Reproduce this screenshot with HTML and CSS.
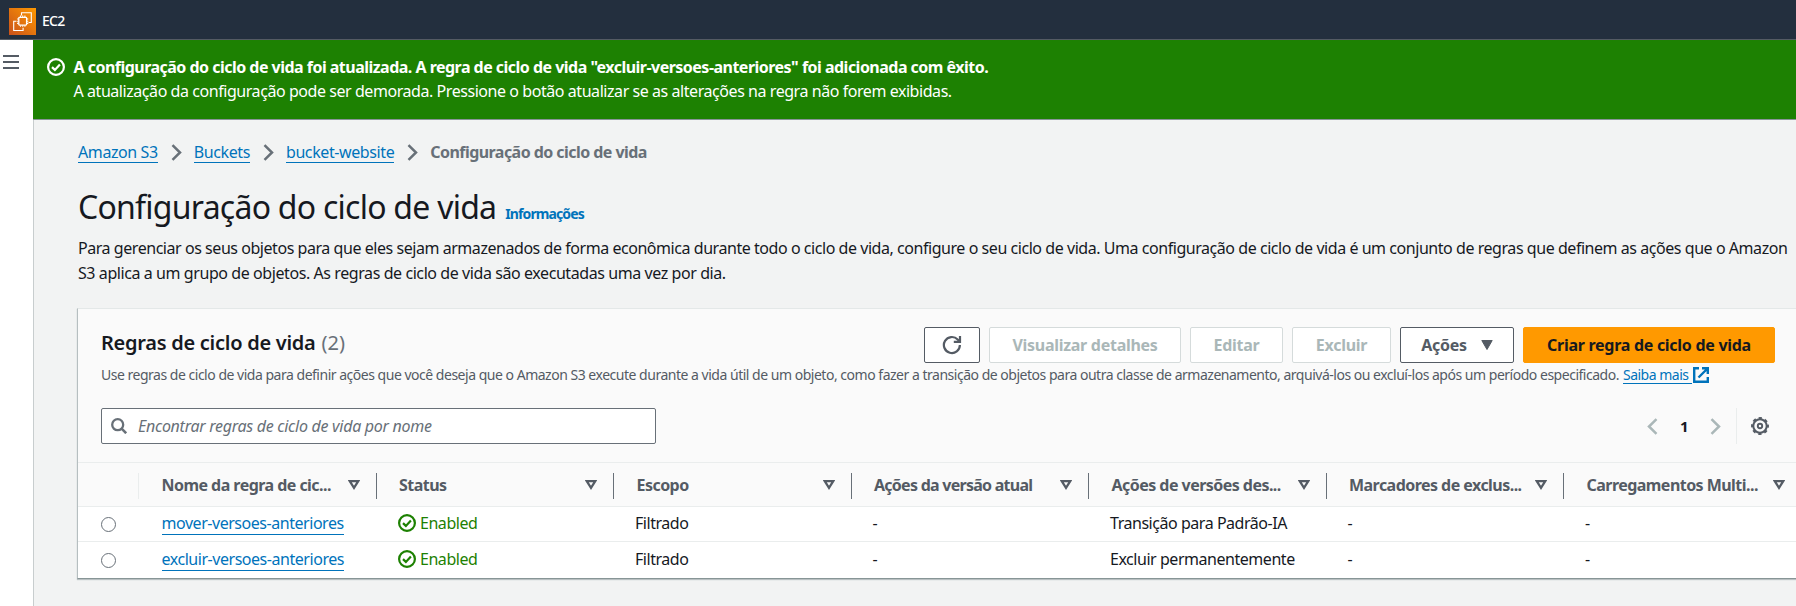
FILE: index.html
```html
<!DOCTYPE html>
<html lang="pt-BR">
<head>
<meta charset="utf-8">
<title>Configuração do ciclo de vida</title>
<link rel="stylesheet" href="styles.css">
</head>
<body>
<svg class="defs" width="0" height="0">
  <defs>
    <symbol id="chev" viewBox="0 0 11 17"><path d="M1.500 1.200 9 8.500 1.500 15.800" fill="none" stroke="currentColor" stroke-width="2.500"/></symbol>
    <symbol id="sort" viewBox="0 0 12 10"><path d="M1.800 1.200h8.400L6 7.900Z" fill="none" stroke="currentColor" stroke-width="2.200"/></symbol>
    <symbol id="check" viewBox="0 0 18 18"><circle cx="9" cy="9" r="7.900" fill="none" stroke="currentColor" stroke-width="2.200"/><path d="m5 9.100 2.900 2.800L12.900 6.600" fill="none" stroke="currentColor" stroke-width="2.200"/></symbol>
  </defs>
</svg>

<header class="topbar">
  <svg class="logo" viewBox="0 0 27 27">
    <defs><linearGradient id="lg" x1="0" y1="1" x2="1" y2="0"><stop offset="0" stop-color="#c8511b"/><stop offset="1" stop-color="#f90"/></linearGradient></defs>
    <rect width="27" height="27" fill="url(#lg)"/>
    <g fill="none" stroke="#fff" stroke-width="1.100">
      <path d="M12.500 7.500V4.800h9.800v9.700h-2.700M7.500 13.200H4.700v9.300h9.400v-2.700"/>
      <rect x="9.800" y="9.300" width="7.800" height="7.800" rx=".8" stroke-width="1.300"/>
      <path d="M11.500 9V7.600M13.700 9V7.600M15.900 9V7.600M11.500 18.800v-1.400M13.700 18.800v-1.400M15.900 18.800v-1.400M9.500 11H8.100M9.500 13.200H8.100M9.500 15.400H8.100M19.300 11h-1.400M19.300 13.200h-1.400M19.300 15.400h-1.400"/>
    </g>
  </svg>
  <span class="service">EC2</span>
</header>

<div class="shell">
  <aside class="rail"><div class="menu"><i></i><i></i><i></i></div></aside>
  <main class="main">
    <section class="flash">
      <svg class="flash-icon"><use href="#check"/></svg>
      <div class="flash-text">
        <div class="flash-title">A configuração do ciclo de vida foi atualizada. A regra de ciclo de vida "excluir-versoes-anteriores" foi adicionada com êxito.</div>
        <div class="flash-body">A atualização da configuração pode ser demorada. Pressione o botão atualizar se as alterações na regra não forem exibidas.</div>
      </div>
    </section>

    <div class="content">
      <nav class="crumbs">
        <a class="link">Amazon S3</a><svg><use href="#chev"/></svg>
        <a class="link">Buckets</a><svg><use href="#chev"/></svg>
        <a class="link">bucket-website</a><svg><use href="#chev"/></svg>
        <b>Configuração do ciclo de vida</b>
      </nav>
      <div class="title"><h1>Configuração do ciclo de vida</h1><span class="info">Informações</span></div>
      <p class="intro"><span class="intro-line">Para gerenciar os seus objetos para que eles sejam armazenados de forma econômica durante todo o ciclo de vida, configure o seu ciclo de vida. Uma configuração de ciclo de vida é um conjunto de regras que definem as ações que o Amazon</span> <span class="intro-line second">S3 aplica a um grupo de objetos. As regras de ciclo de vida são executadas uma vez por dia.</span></p>

      <section class="panel">
        <div class="panel-head">
          <div class="actions-row">
            <h2>Regras de ciclo de vida <span class="count">(2)</span></h2>
            <div class="buttons">
              <button class="btn refresh"><svg viewBox="0 0 20 20"><path d="M17.900 10a8 8 0 1 1-2.200-5.500L17 5.900" fill="none" stroke="currentColor" stroke-width="2.200"/><path d="M18 1v5.800h-6.200" fill="none" stroke="currentColor" stroke-width="2.200"/></svg></button>
              <button class="btn off details">Visualizar detalhes</button>
              <button class="btn off edit">Editar</button>
              <button class="btn off delete">Excluir</button>
              <button class="btn menu-btn">Ações<svg viewBox="0 0 12 10"><path d="M.8.500h10.400L6 9.500Z" fill="currentColor" stroke="currentColor" stroke-linejoin="round"/></svg></button>
              <button class="btn primary">Criar regra de ciclo de vida</button>
            </div>
          </div>
          <div class="desc"><span class="desc-text">Use regras de ciclo de vida para definir ações que você deseja que o Amazon S3 execute durante a vida útil de um objeto, como fazer a transição de objetos para outra classe de armazenamento, arquivá-los ou excluí-los após um período especificado.</span><a class="link more">Saiba mais</a><svg class="ext" viewBox="0 0 16 16"><path d="M6 1.200H1.200v13.600h13.600V10M9 1.200h5.800V7M14.500 1.500 5.500 10.500" fill="none" stroke="currentColor" stroke-width="2.400"/></svg></div>
          <div class="tools">
            <div class="search"><svg viewBox="0 0 16 16"><circle cx="6.700" cy="6.700" r="5.500" fill="none" stroke="currentColor" stroke-width="2.300"/><path d="m10.600 10.600 4.600 4.600" stroke="currentColor" stroke-width="2.600"/></svg><span>Encontrar regras de ciclo de vida por nome</span></div>
            <div class="pager">
              <svg class="prev"><use href="#chev"/></svg><b>1</b><svg class="next"><use href="#chev"/></svg>
              <span class="gear"><svg viewBox="0 0 18 18" fill="none" stroke="currentColor"><circle cx="9" cy="9" r="2.200" stroke-width="1.900"/><circle cx="9" cy="9" r="6.700" stroke-width="2"/><circle cx="9" cy="9" r="8" stroke-width="1.900" stroke-dasharray="3.300 2.983" stroke-dashoffset="1.650"/></svg></span>
            </div>
          </div>
        </div>

        <div class="grid thead">
          <div class="th pick"></div>
          <div class="th"><span>Nome da regra de cic...</span><svg><use href="#sort"/></svg></div>
          <div class="th"><span>Status</span><svg><use href="#sort"/></svg></div>
          <div class="th"><span>Escopo</span><svg><use href="#sort"/></svg></div>
          <div class="th tight"><span>Ações da versão atual</span><svg><use href="#sort"/></svg></div>
          <div class="th"><span>Ações de versões des...</span><svg><use href="#sort"/></svg></div>
          <div class="th"><span>Marcadores de exclus...</span><svg><use href="#sort"/></svg></div>
          <div class="th"><span>Carregamentos Multi...</span><svg><use href="#sort"/></svg></div>
        </div>
        <div class="grid row">
          <div class="pick"><i class="radio"></i></div>
          <div class="name"><a class="link">mover-versoes-anteriores</a></div>
          <div class="ok"><svg><use href="#check"/></svg>Enabled</div>
          <div>Filtrado</div><div>-</div><div>Transição para Padrão-IA</div><div>-</div><div>-</div>
        </div>
        <div class="grid row last">
          <div class="pick"><i class="radio"></i></div>
          <div class="name"><a class="link">excluir-versoes-anteriores</a></div>
          <div class="ok"><svg><use href="#check"/></svg>Enabled</div>
          <div>Filtrado</div><div>-</div><div>Excluir permanentemente</div><div>-</div><div>-</div>
        </div>
      </section>
    </div>
  </main>
</div>
</body>
</html>
```
FILE: styles.css
```css
* { box-sizing: border-box; }
body {
  margin: 0;
  height: 606px;
  overflow: hidden;
  display: flex;
  flex-direction: column;
  background: #f2f3f3;
  color: #16191f;
  font: 16px/24px "Noto Sans", "Open Sans", sans-serif;
  letter-spacing: -0.46px;
  white-space: nowrap;
}
h1, h2, p { margin: 0; }
svg { display: block; flex: none; }
.defs { position: absolute; }

.topbar {
  height: 40px;
  flex: none;
  display: flex;
  align-items: center;
  gap: 6px;
  padding: 3px 0 0 9px;
  background: #232f3e;
  border-bottom: 1px solid #545b64;
}
.logo { width: 27px; height: 27px; }
.service { color: #fff; font-size: 14px; font-weight: 500; letter-spacing: -0.7px; }

.shell { flex: 1; display: flex; min-height: 0; }
.rail { width: 34px; flex: none; background: #fff; border-right: 1px solid #c8cdce; padding: 15px 0 0 3px; }
.menu { width: 16px; display: grid; gap: 4px; }
.menu i { height: 2px; background: #545b64; }
.main { flex: 1; min-width: 0; margin-left: -1px; overflow: hidden; }

.flash {
  height: 80px;
  display: flex;
  padding: 15px 0 0 14px;
  background: #1d8102;
  color: #fff;
  border-bottom: 1px solid #8a9499;
}
.flash-icon { width: 18px; height: 18px; margin: 3px 8.5px 0 0; }
.flash-title { font-weight: 700; letter-spacing: -0.52px; }
.flash-body { letter-spacing: -0.44px; }

.content { padding: 20px 0 0 44px; border-left: 1px solid #c8cdce; height: 500px; }
.link { color: #0073bb; box-shadow: 0 1px 0 #0073bb; display: inline-block; line-height: 22px; }

.crumbs { display: flex; align-items: center; height: 24px; color: #687078; }
.crumbs .link { letter-spacing: -0.4px; line-height: 20px; }
.crumbs svg { width: 11px; height: 17px; margin: 0 12px 0 13px; }
.crumbs b { letter-spacing: -0.55px; }

.title { display: flex; align-items: baseline; gap: 9px; height: 40px; margin-top: 23px; line-height: 40px; }
h1 { font-size: 32px; font-weight: 400; letter-spacing: -0.75px; }
.info { font-size: 14px; font-weight: 700; letter-spacing: -0.9px; color: #0073bb; }

.intro { margin-top: 9px; line-height: 25px; letter-spacing: -0.45px; }
.intro-line { display: block; }
.second { letter-spacing: -0.42px; }

.panel {
  width: 1725px;
  margin-top: 22px;
  margin-left: -1px;
  background: #fff;
  border: 1px solid #d5dbdb;
  border-left-color: #b6bec0;
  border-top-color: #e4e8e8;
  border-bottom: 1px solid #879596;
  box-shadow: 0 1px 1px #b9c0c2;
}
.panel-head { width: 1717px; padding: 18px 20px 18px 23px; background: #fafafa; box-shadow: 20px 0 0 #fafafa; }
.actions-row { display: flex; justify-content: space-between; height: 36px; }
h2 { font-size: 20px; line-height: 32px; font-weight: 600; letter-spacing: -0.27px; }
.count { font-weight: 400; color: #687078; margin-left: 1px; letter-spacing: 0; }
.buttons { display: flex; gap: 9px; }
.btn {
  height: 36px;
  padding: 0;
  display: flex;
  align-items: center;
  justify-content: center;
  background: #fff;
  border: 1px solid #545b64;
  border-radius: 2px;
  color: #545b64;
  font: 700 16px/24px "Noto Sans", "Open Sans", sans-serif;
  letter-spacing: -0.28px;
}
.refresh { width: 56px; }
.refresh svg { width: 20px; height: 20px; }
.off { color: #aab7b8; border-color: #d5dbdb; }
.details { width: 192px; }
.edit { width: 93px; }
.delete { width: 99px; }
.menu-btn { width: 114px; gap: 14px; }
.menu-btn svg { width: 12px; height: 10px; }
.primary { width: 252px; background: #f90; border-color: #f90; color: #16191f; }

.desc { display: flex; height: 21px; margin-top: 1px; font-size: 14px; line-height: 22px; color: #545b64; }
.desc-text { letter-spacing: -0.486px; }
.more { margin-left: 4px; line-height: 20px; padding: 1px 3px 0 0; height: 19px; letter-spacing: -0.49px; }
.ext { width: 16px; height: 16px; margin: 3px 0 0 1px; color: #0073bb; }

.tools { display: flex; justify-content: space-between; margin-top: 23px; height: 36px; }
.search {
  width: 555px;
  display: flex;
  align-items: center;
  gap: 11px;
  padding-left: 9px;
  background: #fff;
  border: 1px solid #687078;
  border-radius: 2px;
  color: #687078;
  font-style: italic;
  letter-spacing: -0.28px;
}
.search svg { width: 16px; height: 16px; }
.pager { display: flex; align-items: center; color: #16191f; font-size: 15px; }
.pager svg { width: 11px; height: 17px; color: #aab7b8; }
.prev { transform: scaleX(-1); }
.pager b { width: 52px; text-align: center; }
.gear { height: 36px; margin-left: 15px; padding: 9px 6px 0 14px; border-left: 1px solid #eaeded; }
.gear svg { width: 18px; height: 18px; color: #545b64; }

.grid { display: grid; grid-template-columns: 61px repeat(7, 237.5px); width: 1724px; overflow: hidden; }
.thead { height: 45px; padding: 10px 0 11px; background: #fafafa; border-top: 1px solid #eaeded; border-bottom: 1px solid #eaeded; color: #545b64; font-weight: 700; }
.th { display: flex; align-items: center; justify-content: space-between; padding: 0 16px 2px 22.5px; border-right: 1px solid #687078; letter-spacing: -0.54px; }
.th.pick { border-color: #eaeded; }
.tight { letter-spacing: -0.74px; }
.th svg { width: 12px; height: 10px; }
.row { height: 35px; border-bottom: 1px solid #eaeded; align-items: center; padding-bottom: 2px; }
.last { height: 36px; border-bottom: 0; }
.row > div { padding-left: 21px; }
.row > .name { padding-left: 22.5px; }
.row > .pick { padding: 3px 0 0 23px; }
.radio { display: block; width: 15px; height: 15px; border: 1px solid #687078; border-radius: 50%; background: #fff; }
.row .ok { display: flex; align-items: center; gap: 4px; padding-left: 21.5px; color: #1d8102; }
.ok svg { width: 18px; height: 18px; }
```
